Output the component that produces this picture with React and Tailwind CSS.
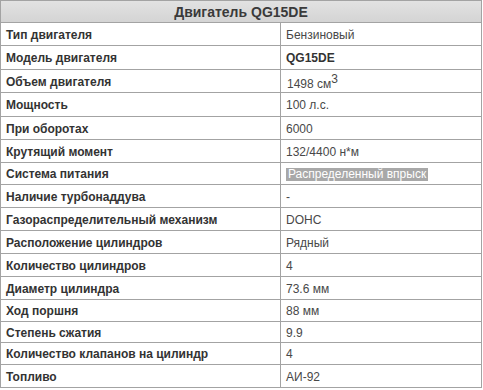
const rows = [
  { label: "Тип двигателя", value: "Бензиновый", h: "h-[23px]" },
  { label: "Модель двигателя", value: "QG15DE", bold: true, h: "h-[24px]" },
  { label: "Объем двигателя", value: "1498 см", sup: "3", h: "h-[23px]" },
  { label: "Мощность", value: "100 л.с.", h: "h-[24px]" },
  { label: "При оборотах", value: "6000", h: "h-[23px]" },
  { label: "Крутящий момент", value: "132/4400 н*м", h: "h-[23px]" },
  { label: "Система питания", value: "Распределенный впрыск", mark: true, h: "h-[22px]" },
  { label: "Наличие турбонаддува", value: "-", h: "h-[23px]" },
  { label: "Газораспределительный механизм", value: "DOHC", h: "h-[23px]" },
  { label: "Расположение цилиндров", value: "Рядный", h: "h-[23px]" },
  { label: "Количество цилиндров", value: "4", h: "h-[23px]" },
  { label: "Диаметр цилиндра", value: "73.6 мм", h: "h-[23px]" },
  { label: "Ход поршня", value: "88 мм", h: "h-[22px]" },
  { label: "Степень сжатия", value: "9.9", h: "h-[21px]" },
  { label: "Количество клапанов на цилиндр", value: "4", h: "h-[22px]" },
  { label: "Топливо", value: "АИ-92", h: "h-[22px]" },
];

export default function App() {
  return (
    <div className="w-[483px] h-[390px] bg-white font-['Liberation_Sans',Arial,sans-serif] text-[#333]">
      <div className="w-[482px] border border-[#a3a3a3]">
        {/* Header */}
        <div className="h-[22px] flex items-center justify-center pt-[1px] bg-gradient-to-b from-[#e2e2e2] to-[#d4d4d4] border-b border-[#a3a3a3] text-[14px] font-bold text-[#3a3a3a]">
          Двигатель QG15DE
        </div>

        {rows.map((r, i) => (
          <div
            key={i}
            className={`flex ${r.h} ${i < rows.length - 1 ? "border-b border-[#a3a3a3]" : ""}`}
          >
            <div className="w-[280px] shrink-0 flex items-center pl-[5px] pt-[1px] text-[12px] font-bold text-[#333] border-r border-[#a3a3a3]">
              {r.label}
            </div>
            <div className="flex-1 flex items-center pl-[5px] pt-[1px] text-[12px] text-[#484848]">
              {r.mark ? (
                <span className="bg-[#a8a8a8] text-white px-[2px] leading-[13px]">{r.value}</span>
              ) : r.bold ? (
                <span className="font-bold text-[#333]">{r.value}</span>
              ) : (
                <span className={r.sup ? "pl-[1px] pt-[4px]" : ""}>
                  {r.value}
                  {r.sup && <sup className="text-[12px] -top-[5px]">{r.sup}</sup>}
                </span>
              )}
            </div>
          </div>
        ))}
      </div>
    </div>
  );
}
